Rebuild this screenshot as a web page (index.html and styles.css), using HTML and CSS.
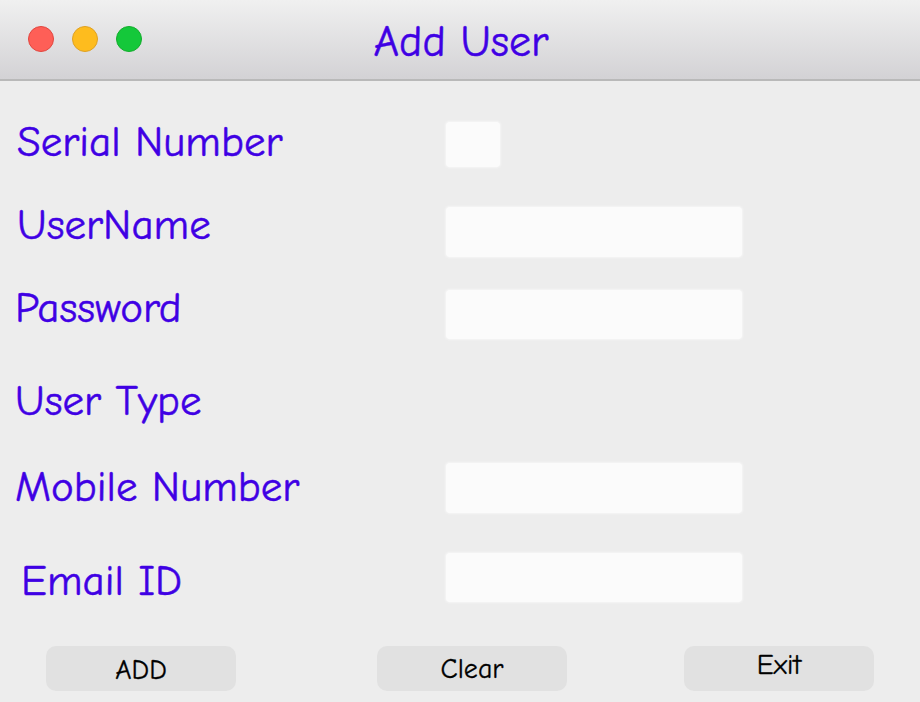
FILE: index.html
```html
<!DOCTYPE html>
<html lang="en">
<head>
<meta charset="utf-8">
<title>Add User</title>
<link rel="stylesheet" href="styles.css">
</head>
<body>
<div class="window">
  <header class="titlebar">
    <div class="lights">
      <span class="light light-close"></span>
      <span class="light light-min"></span>
      <span class="light light-max"></span>
    </div>
    <h1 class="title">Add User</h1>
  </header>
  <main class="form">
    <div class="row row-serial">
      <label class="label">Serial Number</label>
      <div class="field field-short"></div>
    </div>
    <div class="row row-username">
      <label class="label">UserName</label>
      <div class="field"></div>
    </div>
    <div class="row row-password">
      <label class="label">Password</label>
      <div class="field"></div>
    </div>
    <div class="row row-type">
      <label class="label">User Type</label>
    </div>
    <div class="row row-mobile">
      <label class="label">Mobile Number</label>
      <div class="field"></div>
    </div>
    <div class="row row-email">
      <label class="label">Email ID</label>
      <div class="field"></div>
    </div>
    <div class="buttons">
      <button class="btn btn-add">ADD</button>
      <button class="btn btn-clear">Clear</button>
      <button class="btn btn-exit">Exit</button>
    </div>
  </main>
</div>
</body>
</html>
```

FILE: styles.css
```css
* { box-sizing: border-box; }
html, body { margin: 0; padding: 0; }
body {
  width: 920px;
  height: 702px;
  overflow: hidden;
  background: #ededed;
  font-family: "Comic Sans MS", "Comic Neue", "Liberation Sans", Arial, sans-serif;
}
.window { display: flex; flex-direction: column; height: 702px; }
.titlebar {
  position: relative;
  height: 81px;
  background: linear-gradient(#f0f0f0, #d3d2d5);
  border-bottom: 2px solid #b9b9b9;
  display: flex;
  align-items: center;
  justify-content: center;
}
.lights {
  position: absolute;
  left: 28px;
  top: 26px;
  display: flex;
  gap: 18px;
}
.light {
  width: 26px;
  height: 26px;
  border-radius: 50%;
  display: block;
}
.light-close { background: #fe5f57; border: 1px solid #e2463f; }
.light-min { background: #febc1e; border: 1px solid #dfa123; }
.light-max { background: #14c83a; border: 1px solid #12ad2b; }
.title {
  margin: 0;
  margin-left: 2px;
  margin-top: 4px;
  font-weight: normal;
  font-size: 44px;
  line-height: 41px;
  color: #3f00e4;
  -webkit-text-stroke: 0.5px #3f00e4;
}
.form { display: flex; flex-direction: column; }
.row {
  display: grid;
  grid-template-columns: 446px 296px;
  align-items: start;
}
.label {
  font-size: 43px;
  line-height: 41px;
  color: #3f00e4;
  -webkit-text-stroke: 0.5px #3f00e4;
  padding-left: 17px;
}
.field {
  height: 50px;
  background: #fbfbfb;
  border-radius: 4px;
  box-shadow: 0 0 2px 1px #f6f6f6;
}
.field-short { width: 54px; height: 45px; }
.row-serial { margin-top: 41px; }
.row-username { margin-top: 38px; }
.row-username .field { margin-top: 2px; }
.row-password { margin-top: 31px; }
.row-password .label { padding-left: 15px; }
.row-password .field { margin-top: 2px; height: 49px; }
.row-type { margin-top: 42px; }
.row-type .label { padding-left: 15px; }
.row-mobile { margin-top: 41px; }
.row-mobile .label { margin-top: 4px; padding-left: 15px; }
.row-email { margin-top: 40px; }
.row-email .label { margin-top: 8px; padding-left: 21px; }
.row-email .field { height: 49px; }
.buttons {
  display: flex;
  padding-left: 46px;
  margin-top: 44px;
}
.btn {
  width: 190px;
  height: 45px;
  border: none;
  border-radius: 10px;
  background: #e1e1e1;
  color: #000;
  font-family: inherit;
  font-size: 28px;
  line-height: 26px;
  -webkit-text-stroke: 0.3px #000;
  padding: 0;
}
.btn-add { padding-top: 3px; }
.btn-clear { margin-left: 141px; }
.btn-exit { margin-left: 117px; padding-bottom: 7px; }
```
